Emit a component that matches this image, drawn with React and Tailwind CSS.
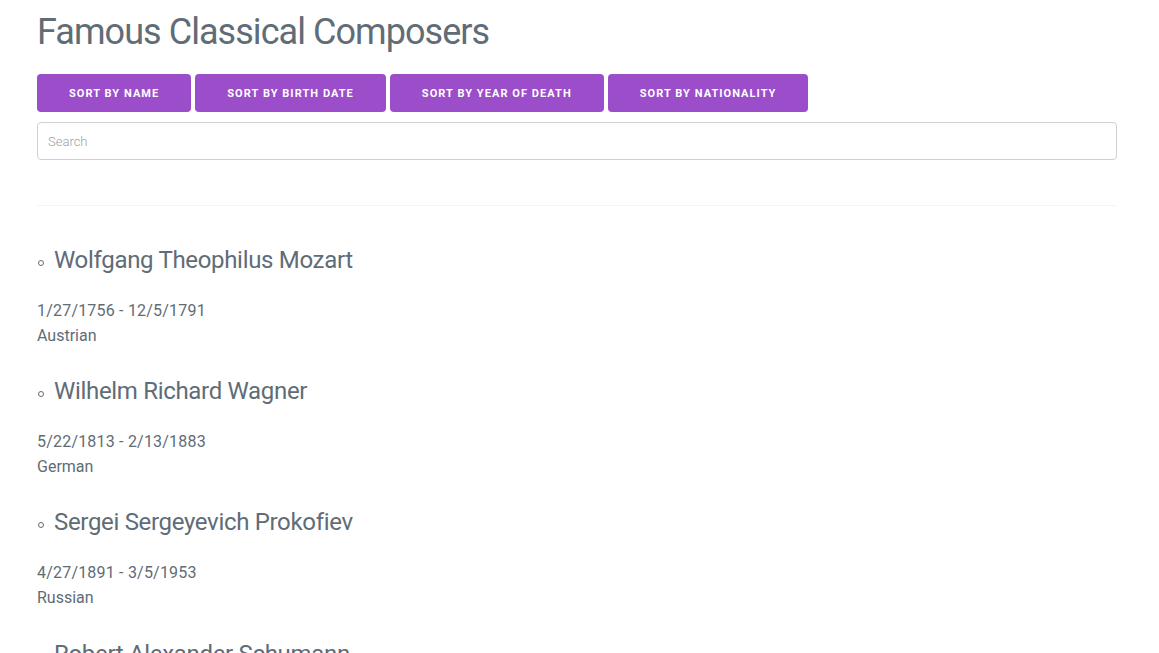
import React from "react";

const composers = [
  { name: "Wolfgang Theophilus Mozart", born: "1/27/1756", died: "12/5/1791", nationality: "Austrian" },
  { name: "Wilhelm Richard Wagner", born: "5/22/1813", died: "2/13/1883", nationality: "German" },
  { name: "Sergei Sergeyevich Prokofiev", born: "4/27/1891", died: "3/5/1953", nationality: "Russian" },
  { name: "Robert Alexander Schumann", born: "6/8/1810", died: "7/29/1856", nationality: "German" },
];

const buttons = ["Sort by name", "Sort by birth date", "Sort by year of death", "Sort by nationality"];

const App = () => {
  return (
    <div className="min-h-screen bg-white text-[#606c76] font-['Roboto','Liberation_Sans',sans-serif] font-normal">
      <div className="px-[37px] pt-[10px] w-[1154px]">
        <h1 className="text-[36px] leading-[45px] tracking-[-0.95px] mb-[19px]">Famous Classical Composers</h1>

        <div className="flex gap-[4px] mb-[10px]">
          {buttons.map((b) => (
            <button
              key={b}
              className="h-[38px] pt-[3px] px-[32px] bg-[#9b4dca] text-white text-[11px] font-bold tracking-[1.05px] uppercase rounded-[4px]"
            >
              {b}
            </button>
          ))}
        </div>

        <input
          placeholder="Search"
          className="w-full h-[38px] border border-[#d1d1d1] rounded-[4px] px-[10px] text-[13px] font-light placeholder:text-[#a0a0a0] outline-none"
        />

        <hr className="mt-[45px] mb-[39px] border-0 border-t border-[#f4f5f6]" />

        <ul>
          {composers.map((c) => (
            <li key={c.name} className="mb-[28px]">
              <div className="flex items-center mb-[22px]">
                <span className="w-[6px] h-[6px] rounded-full border border-[#606c76] mt-[6px] ml-[1px] mr-[10px]"></span>
                <span className="text-[24px] leading-[30px] tracking-[-0.32px]">{c.name}</span>
              </div>
              <p className="text-[16px] leading-[25.6px] pt-[1px] tracking-[0.2px]">
                {c.born} - {c.died}
              </p>
              <p className="text-[16px] leading-[25.6px] -mt-[1px]">{c.nationality}</p>
            </li>
          ))}
        </ul>
      </div>
    </div>
  );
};

export default App;
